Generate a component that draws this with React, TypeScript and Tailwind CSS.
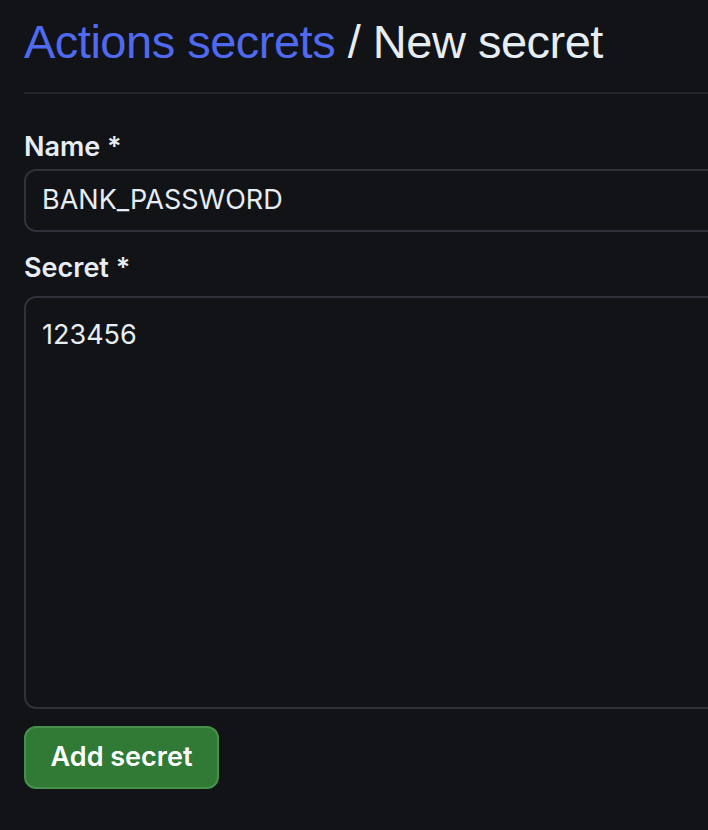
export default function App() {
  return (
    <div className="h-[830px] w-[708px] overflow-hidden bg-[#121317] text-[#e6edf3]">
      <div className="w-[760px] pl-6" style={{ fontFamily: 'Inter, "Noto Sans", sans-serif' }}>
        <h1
          className="pt-[14px] pb-[22px] text-[47px] leading-[56px] font-normal tracking-[-0.5px] border-b-2 border-[#24262c]"
          style={{ fontFamily: '"Liberation Sans", Arial, sans-serif' }}
        >
          <span className="text-[#4f6af0]">Actions secrets</span> / New secret
        </h1>

        <form className="pt-[37px]">
          <label className="block text-[27px] leading-[32px] font-semibold">Name *</label>
          <div className="mt-[6px] h-[63px] rounded-[12px] border-2 border-[#30323a] flex items-center px-[16px] text-[27px]">
            BANK_PASSWORD
          </div>

          <label className="block mt-[20px] text-[27px] leading-[32px] font-semibold">Secret *</label>
          <div className="mt-[12px] h-[413px] rounded-[12px] border-2 border-[#30323a] px-[16px] pt-[20px] text-[27px] leading-[34px]">
            123456
          </div>

          <button
            type="button"
            className="mt-[17px] h-[63px] w-[195px] rounded-[12px] border-2 border-[#46904a] bg-[#317a35] text-white text-[27px] font-semibold"
          >
            Add secret
          </button>
        </form>
      </div>
    </div>
  );
}
